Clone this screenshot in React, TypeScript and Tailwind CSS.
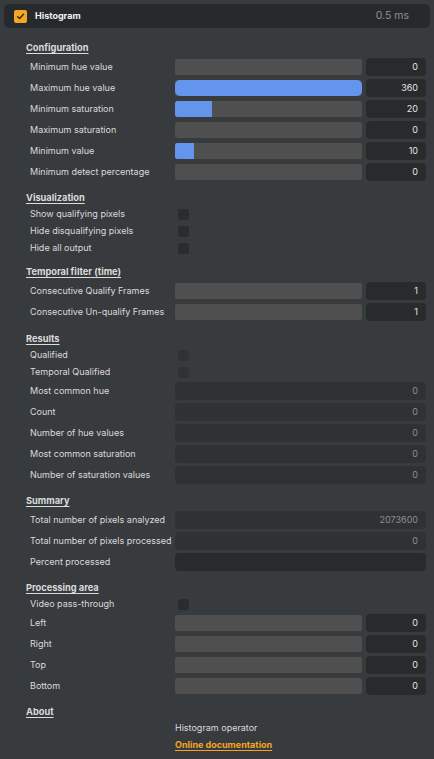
import React from 'react'

type SliderRow = { label: string; value: number; max: number }
type FieldRow = { label: string; value: string; dark?: boolean }

const config: SliderRow[] = [
  { label: 'Minimum hue value', value: 0, max: 360 },
  { label: 'Maximum hue value', value: 360, max: 360 },
  { label: 'Minimum saturation', value: 20, max: 100 },
  { label: 'Maximum saturation', value: 0, max: 100 },
  { label: 'Minimum value', value: 10, max: 100 },
  { label: 'Minimum detect percentage', value: 0, max: 100 },
]

const temporal: SliderRow[] = [
  { label: 'Consecutive Qualify Frames', value: 1, max: 0 },
  { label: 'Consecutive Un-qualify Frames', value: 1, max: 0 },
]

const results: FieldRow[] = [
  { label: 'Most common hue', value: '0' },
  { label: 'Count', value: '0' },
  { label: 'Number of hue values', value: '0' },
  { label: 'Most common saturation', value: '0' },
  { label: 'Number of saturation values', value: '0' },
]

const summary: FieldRow[] = [
  { label: 'Total number of pixels analyzed', value: '2073600' },
  { label: 'Total number of pixels processed', value: '0' },
  { label: 'Percent processed', value: '', dark: true },
]

const area: SliderRow[] = [
  { label: 'Left', value: 0, max: 0 },
  { label: 'Right', value: 0, max: 0 },
  { label: 'Top', value: 0, max: 0 },
  { label: 'Bottom', value: 0, max: 0 },
]

const Heading = ({ children, className = 'mt-[8.5px]' }: { children: React.ReactNode; className?: string }) => (
  <div
    className={`${className} h-[14px] mb-px flex items-center text-[9.25px] font-bold text-[#dcdcdc] underline underline-offset-2`}
  >
    {children}
  </div>
)

const Label = ({ children }: { children: React.ReactNode }) => (
  <div className="pl-1 text-[9px] text-[#dadada] whitespace-nowrap">{children}</div>
)

const Slider = ({ row }: { row: SliderRow }) => {
  const pct = row.max > 0 ? (row.value / row.max) * 100 : 0
  const full = pct >= 100
  return (
    <div className="grid grid-cols-[149px_1fr] items-center h-[21px]">
      <Label>{row.label}</Label>
      <div className="flex items-center gap-1">
        <div className="relative flex-1 h-4 bg-[#4f4f4f] rounded-[2px] overflow-hidden">
          {pct > 0 && (
            <div
              className={`h-full bg-[#6495ed] ${full ? 'rounded-[5px]' : 'rounded-l-[2px]'}`}
              style={{ width: `${pct}%` }}
            />
          )}
        </div>
        <div className="w-[60px] h-[18px] rounded-[4px] bg-[#282b2c] flex items-center justify-end pr-2 text-[9px] text-[#e4e4e4]">
          {row.value}
        </div>
      </div>
    </div>
  )
}

const Field = ({ row }: { row: FieldRow }) => (
  <div className="grid grid-cols-[149px_1fr] items-center h-[21px]">
    <Label>{row.label}</Label>
    <div
      className={`h-[18px] rounded-[4px] flex items-center justify-end pr-2 text-[9px] text-[#8c8f91] ${
        row.dark ? 'bg-[#282b2c]' : 'bg-[#2f3234]'
      }`}
    >
      {row.value}
    </div>
  </div>
)

const Check = ({ label, muted }: { label: string; muted?: boolean }) => (
  <div className="grid grid-cols-[149px_1fr] items-center h-[17px]">
    <Label>{label}</Label>
    <div className={`ml-[3px] w-[11px] h-[11px] rounded-[2px] ${muted ? 'bg-[#303335]' : 'bg-[#2a2d2f]'}`} />
  </div>
)

export default function App() {
  return (
    <div
      className="min-h-screen bg-[#373b3e] px-1 pt-1 pb-4 select-none"
      style={{ fontFamily: 'Inter, "Noto Sans", "Liberation Sans", sans-serif' }}
    >
      {/* operator header */}
      <div className="h-6 rounded-[5px] bg-[#272a2c] flex items-center pl-[10px] pr-[21px]">
        <div className="w-[13px] h-[13px] rounded-[2px] bg-[#f5a623] flex items-center justify-center">
          <svg width="9" height="9" viewBox="0 0 10 10" fill="none">
            <path d="M1.8 5.2 L4 7.3 L8.3 2.6" stroke="#2a2a2a" strokeWidth="1.6" strokeLinecap="round" strokeLinejoin="round" />
          </svg>
        </div>
        <span className="ml-2 text-[9px] font-bold text-[#f0f0f0]">Histogram</span>
        <span className="ml-auto text-[10.5px] text-[#8d9092]">0.5 ms</span>
      </div>

      <div className="pl-[22px] pr-1">
        <Heading className="mt-[13px]">Configuration</Heading>
        {config.map(r => <Slider key={r.label} row={r} />)}

        <Heading>Visualization</Heading>
        <Check label="Show qualifying pixels" />
        <Check label="Hide disqualifying pixels" />
        <Check label="Hide all output" />

        <Heading>Temporal filter (time)</Heading>
        {temporal.map(r => <Slider key={r.label} row={r} />)}

        <Heading className="mt-[9.5px]">Results</Heading>
        <Check label="Qualified" muted />
        <Check label="Temporal Qualified" muted />
        {results.map(r => <Field key={r.label} row={r} />)}

        <Heading>Summary</Heading>
        {summary.map(r => <Field key={r.label} row={r} />)}

        <Heading>Processing area</Heading>
        <Check label="Video pass-through" />
        {area.map(r => <Slider key={r.label} row={r} />)}

        <Heading>About</Heading>
        <div className="grid grid-cols-[149px_1fr] text-[9px]">
          <div />
          <div className="flex flex-col">
            <div className="h-4 flex items-center text-[#dadada]">Histogram operator</div>
            <div className="h-[18px] flex items-center font-bold text-[#f5a623] underline underline-offset-2">
              Online documentation
            </div>
          </div>
        </div>
      </div>
    </div>
  )
}
